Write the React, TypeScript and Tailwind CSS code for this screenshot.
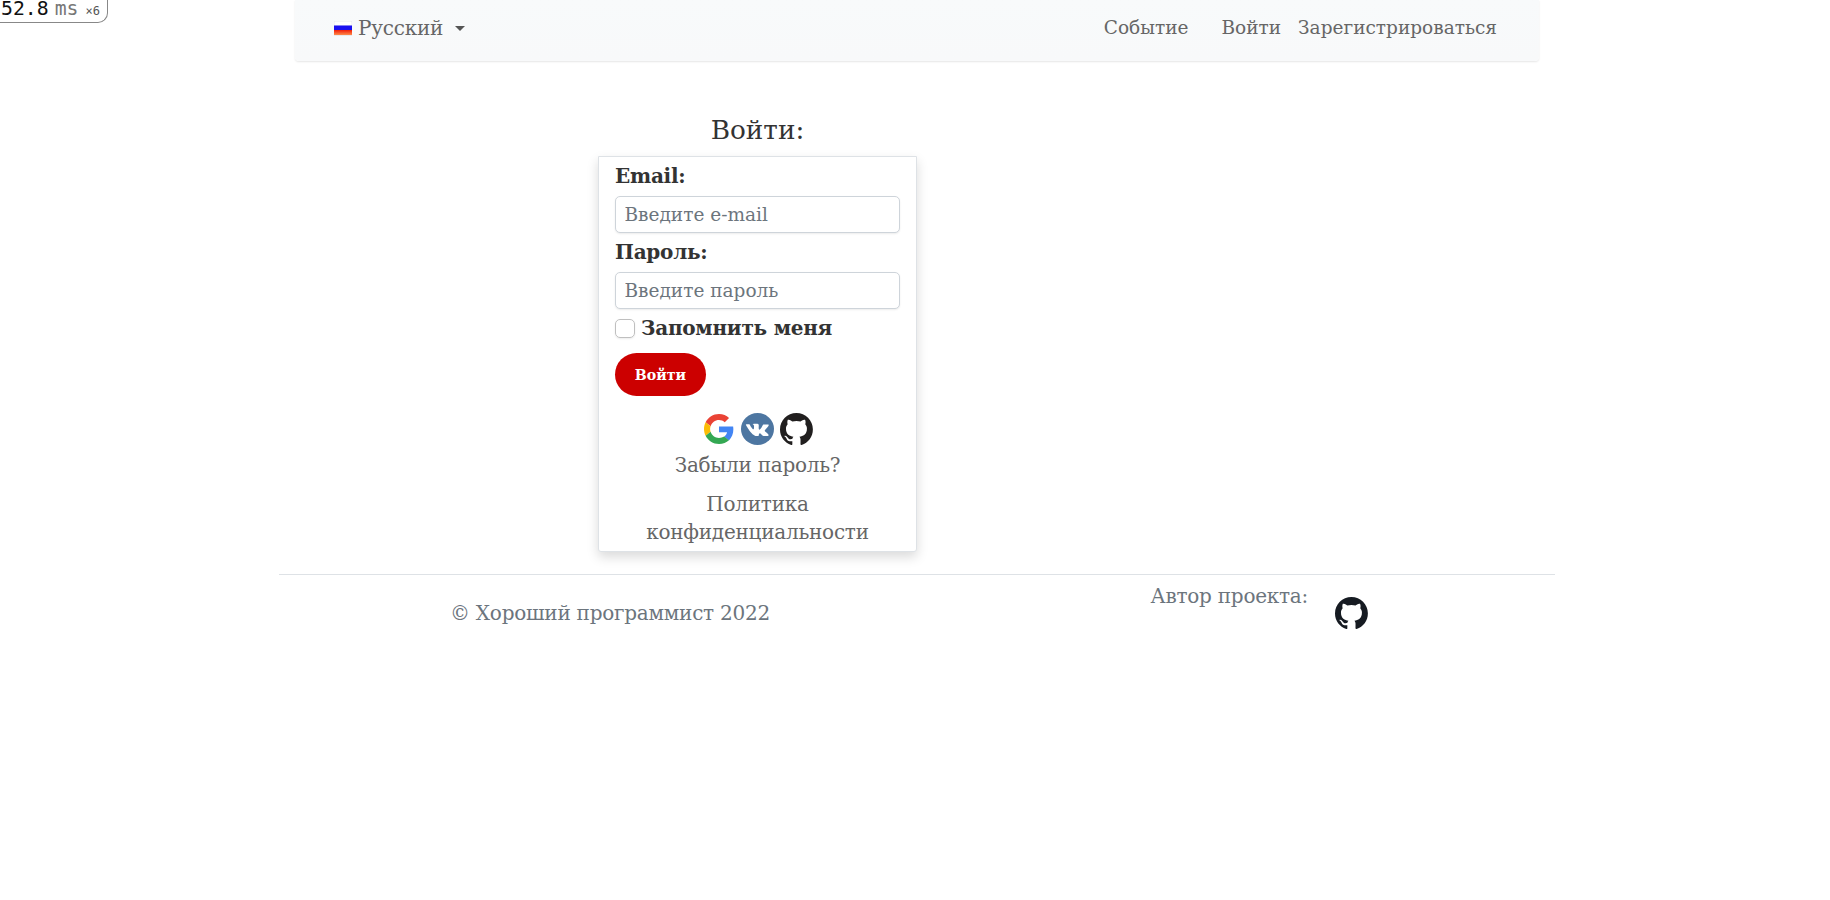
function GoogleMark({ className }: { className: string }) {
  return (
    <svg viewBox="0 0 48 48" className={className} aria-hidden="true">
      <path fill="#EA4335" d="M24 9.5c3.54 0 6.71 1.22 9.21 3.6l6.85-6.85C35.9 2.38 30.47 0 24 0 14.62 0 6.51 5.38 2.56 13.22l7.98 6.19C12.43 13.72 17.74 9.5 24 9.5z" />
      <path fill="#4285F4" d="M46.98 24.55c0-1.57-.15-3.09-.38-4.55H24v9.02h12.94c-.58 2.96-2.26 5.48-4.78 7.18l7.73 6c4.51-4.18 7.09-10.36 7.09-17.65z" />
      <path fill="#FBBC05" d="M10.53 28.59c-.48-1.45-.76-2.99-.76-4.59s.27-3.14.76-4.59l-7.98-6.19C.92 16.46 0 20.12 0 24c0 3.88.92 7.54 2.56 10.78l7.97-6.19z" />
      <path fill="#34A853" d="M24 48c6.48 0 11.93-2.13 15.89-5.81l-7.73-6c-2.15 1.45-4.92 2.3-8.16 2.3-6.26 0-11.57-4.22-13.47-9.91l-7.98 6.19C6.51 42.62 14.62 48 24 48z" />
    </svg>
  );
}

function VkMark({ className }: { className: string }) {
  return (
    <svg viewBox="0 0 33 32" className={className} aria-hidden="true">
      <ellipse cx="16.5" cy="16" rx="16.5" ry="16" fill="#4d76a1" />
      <path
        fill="#fff"
        transform="translate(-0.1 3) scale(1 0.87)"
        d="M15.8 23h1.3s.4 0 .6-.3c.2-.2.2-.6.2-.6s0-1.9.8-2.1c.9-.3 2 1.8 3.2 2.6.9.6 1.6.5 1.6.5l3.2-.1s1.7-.1.9-1.4c-.1-.1-.5-1-2.4-2.8-2-1.9-1.8-1.6.7-4.9 1.5-2 2.1-3.2 1.9-3.8-.2-.5-1.3-.4-1.3-.4h-3.6s-.3 0-.5.1-.3.4-.3.4-.6 1.5-1.3 2.8c-1.6 2.7-2.2 2.8-2.5 2.7-.6-.4-.5-1.6-.5-2.5 0-2.7.4-3.8-.8-4.1-.4-.1-.7-.2-1.7-.2-1.3 0-2.4 0-3 .3-.4.2-.7.7-.5.7.2 0 .7.1 1 .5.3.5.3 1.5.3 1.5s.2 2.9-.5 3.3c-.4.2-1.1-.3-2.4-2.6-.7-1.2-1.2-2.5-1.2-2.5s-.1-.2-.3-.4c-.2-.1-.5-.2-.5-.2H5.800s-.5 0-.7.2c-.2.2 0 .6 0 .6s2.7 6.2 5.7 9.4C13.5 23.2 15.8 23 15.8 23Z"
      />
    </svg>
  );
}

function GithubMark({ className }: { className: string }) {
  return (
    <svg viewBox="0 0 98 96" className={className} preserveAspectRatio="none" fill="currentColor" aria-hidden="true">
      <path
        fillRule="evenodd"
        clipRule="evenodd"
        d="M48.854 0C21.839 0 0 22 0 49.217c0 21.756 13.993 40.172 33.405 46.69 2.427.49 3.316-1.059 3.316-2.362 0-1.141-.08-5.052-.08-9.127-13.59 2.934-16.42-5.867-16.42-5.867-2.184-5.704-5.42-7.17-5.42-7.17-4.448-3.015.324-3.015.324-3.015 4.934.326 7.523 5.052 7.523 5.052 4.367 7.496 11.404 5.378 14.235 4.074.404-3.178 1.699-5.378 3.074-6.6-10.839-1.141-22.243-5.378-22.243-24.283 0-5.378 1.94-9.778 5.014-13.2-.485-1.222-2.184-6.275.486-13.038 0 0 4.125-1.304 13.426 5.052a46.97 46.97 0 0 1 12.214-1.63c4.125 0 8.33.571 12.213 1.63 9.302-6.356 13.427-5.052 13.427-5.052 2.67 6.763.97 11.816.485 13.038 3.155 3.422 5.015 7.822 5.015 13.2 0 18.905-11.404 23.06-22.324 24.283 1.78 1.548 3.316 4.481 3.316 9.126 0 6.6-.08 11.897-.08 13.526 0 1.304.89 2.853 3.316 2.364 19.412-6.52 33.405-24.935 33.405-46.691C97.707 22 75.788 0 48.854 0z"
      />
    </svg>
  );
}

function RussianFlag() {
  return (
    <svg viewBox="0 0 18 15" className="mt-px h-[15px] w-[18px]" aria-hidden="true">
      <defs>
        <linearGradient id="flag-red" x1="0" y1="0" x2="0" y2="1">
          <stop offset="0" stopColor="#f01c08" />
          <stop offset="1" stopColor="#ff8a4a" />
        </linearGradient>
      </defs>
      <rect width="18" height="15" fill="#e9e9ec" />
      <rect x="0.5" y="0.5" width="17" height="4" fill="#fff" />
      <rect y="4.5" width="18" height="5" fill="#1a10f0" />
      <rect y="9" width="18" height="5" fill="url(#flag-red)" />
    </svg>
  );
}

function Field({ label, type, placeholder }: { label: string; type: string; placeholder: string }) {
  return (
    <label className="block font-bold">
      <span className="block h-[39px] pt-[5px]">{label}</span>
      <input
        type={type}
        placeholder={placeholder}
        className="block h-[37px] w-full rounded-[5px] border border-[#ced4da] bg-white px-[8.5px] text-[18.5px] font-normal tracking-normal shadow-[0_1px_2px_rgba(0,0,0,0.08)] outline-none placeholder:text-[#6c757d]"
      />
    </label>
  );
}

export default function App() {
  return (
    <div className="relative min-h-[900px] bg-white font-['DejaVu_Serif',serif] text-[20px] leading-[28px] tracking-[-0.25px] text-[#333]">
      <div className="absolute top-0 left-0 flex h-[23px] w-[108px] items-baseline rounded-br-[10px] border-r border-b border-[#888] bg-white pl-[1px] font-['DejaVu_Sans_Mono',monospace] text-[19.8px] leading-[17px] tracking-normal text-[#111]">
        <span>52.8</span>
        <span className="ml-[6px] text-[#777]">ms</span>
        <span className="ml-[7px] text-[12px] text-[#555]">×6</span>
      </div>
      <div className="flex justify-center pl-1">
        <div className="w-[1276px]">
          <nav className="mx-4 flex h-[61px] items-start rounded-b bg-gradient-to-b from-[#f8fafb] to-[#f8f9fa] pr-[42px] pl-[39px] shadow-[0_1px_2px_rgba(0,0,0,0.1)]">
            <button className="mt-[14px] flex items-center text-[#666]">
              <RussianFlag />
              <span className="ml-[6px]">Русский</span>
              <span className="ml-[12px] border-x-[5px] border-t-[5px] border-x-transparent border-t-[#555]" />
            </button>
            <div className="mt-[14px] ml-auto flex text-[18.5px] tracking-normal text-[#666]">
              <a>Событие</a>
              <a className="ml-[33px]">Войти</a>
              <a className="ml-[17px]">Зарегистрироваться</a>
            </div>
          </nav>
          <main className="ml-[319px] w-[319px] pt-[49px]">
            <h1 className="h-[46px] pt-[5px] text-center text-[26.3px] leading-[30px] tracking-normal">Войти:</h1>
            <form className="h-[396px] rounded-b-[3px] border border-[#dee2e6] bg-white px-4 shadow-[0_5px_12px_rgba(0,0,0,0.15)]">
              <Field label="Email:" type="email" placeholder="Введите e-mail" />
              <Field label="Пароль:" type="password" placeholder="Введите пароль" />
              <label className="flex h-[44px] items-start pt-[5px] font-bold">
                <input type="checkbox" className="mt-[5px] h-[19px] w-5 appearance-none rounded-[5px] border border-[#bfbfbf] shadow-[0_1px_2px_rgba(0,0,0,0.08)]" />
                <span className="ml-[6px]">Запомнить меня</span>
              </label>
              <button type="button" className="block h-[43px] w-[91px] rounded-full bg-[#c00] text-[14.2px] font-bold tracking-normal text-white">
                Войти
              </button>
              <div className="flex h-[55px] items-start justify-center pt-[17px]">
                <GoogleMark className="mt-px ml-px size-[30px]" />
                <VkMark className="ml-[7px] h-[32px] w-[33px]" />
                <GithubMark className="ml-[6px] h-[32px] w-[33px] text-[#211f1f]" />
              </div>
              <div className="text-center text-[#666]">
                <p>Забыли пароль?</p>
                <p className="mt-[11px]">Политика конфиденциальности</p>
              </div>
            </form>
          </main>
          <footer className="mt-[22px] flex items-start border-t border-[#dee2e6] text-[#6c757d]">
            <p className="ml-[171px] pt-[24px]">© Хороший программист 2022</p>
            <div className="mr-[187px] ml-auto flex">
              <p className="pt-[7px]">Автор проекта:</p>
              <GithubMark className="mt-[22px] ml-[27px] h-[32px] w-[33px] text-[#161b22]" />
            </div>
          </footer>
        </div>
      </div>
    </div>
  );
}
